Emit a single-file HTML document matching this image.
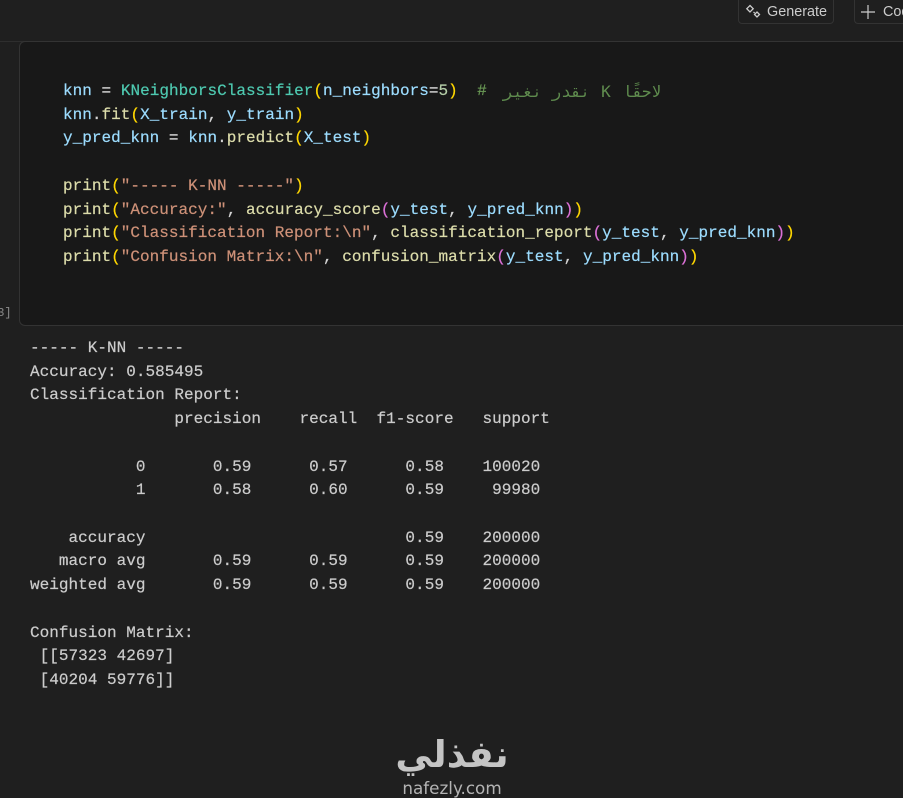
<!DOCTYPE html>
<html><head><meta charset="utf-8"><style>
html,body{margin:0;padding:0;background:#1f1f1f;width:903px;height:798px;overflow:hidden}
body{position:relative;font-family:"Liberation Mono",monospace}
pre{margin:0;position:absolute;font:16px/23.7px "Liberation Mono",monospace;white-space:pre;letter-spacing:.025px;-webkit-text-stroke:.2px currentColor}
.btn{position:absolute;top:-6px;height:30px;border:1px solid #333;border-radius:4px;box-sizing:border-box;font:14.4px "Liberation Sans",sans-serif;color:#ccc;line-height:34px;white-space:nowrap;overflow:hidden}
.v{color:#9cdcfe}.f{color:#dcdcaa}.c{color:#4ec9b0}.s{color:#ce9178}.y{color:#ffd700}.p{color:#da70d6}.g{color:#6a9955}.n{color:#b5cea8}.o{color:#d4d4d4}
.ar{position:absolute;top:80px;height:24px;font:16px/24px "DejaVu Sans Mono","Liberation Mono",monospace;color:#5f8c4e;white-space:nowrap}
</style></head><body>
<div style="position:absolute;left:0;top:41px;width:903px;height:1px;background:#2e2e2e"></div>
<div class="btn" style="left:738px;width:96px;padding-left:28px">Generate<svg style="position:absolute;left:5px;top:9px" width="18" height="16" viewBox="0 0 18 16" fill="none" stroke="#ccc" stroke-width="1.300"><path d="M6 1.500l3.200 3.200-3.200 3.200-3.200-3.200z"/><path d="M13 8l2.500 2.500-2.500 2.500-2.500-2.500z"/><path d="M9.500 8l1.200 1"/></svg></div>
<div class="btn" style="left:854px;width:60px;padding-left:28px;border-right:0;border-radius:4px 0 0 4px">Code<svg style="position:absolute;left:5px;top:9px" width="16" height="16" viewBox="0 0 16 16" stroke="#ccc" stroke-width="1.200"><path d="M8 1v14M1 8h14"/></svg></div>
<div style="position:absolute;left:19px;top:41px;width:900px;height:285px;background:#181818;border:1px solid #333;border-radius:6px;box-sizing:border-box"></div>
<div style="position:absolute;left:-10px;top:306px;font:12px 'Liberation Mono',monospace;color:#8a8a8a">[3]</div>
<pre style="left:63px;top:80px"><span class="v">knn</span> <span class="o">=</span> <span class="c">KNeighborsClassifier</span><span class="y">(</span><span class="v">n_neighbors</span><span class="o">=</span><span class="n">5</span><span class="y">)</span>  <span class="g">#</span></pre>
<div class="ar" style="left:495px;width:95px;text-align:right" dir="rtl">نقدر نغير</div>
<div class="ar" style="left:600px;width:12px;text-align:center">K</div>
<div class="ar" style="left:620px;width:41px;text-align:right" dir="rtl">لاحقًا</div>
<pre style="left:63px;top:103.700px"><span class="v">knn</span><span class="o">.</span><span class="f">fit</span><span class="y">(</span><span class="v">X_train</span><span class="o">,</span> <span class="v">y_train</span><span class="y">)</span>
<span class="v">y_pred_knn</span> <span class="o">=</span> <span class="v">knn</span><span class="o">.</span><span class="f">predict</span><span class="y">(</span><span class="v">X_test</span><span class="y">)</span>

<span class="f">print</span><span class="y">(</span><span class="s">"----- K-NN -----"</span><span class="y">)</span>
<span class="f">print</span><span class="y">(</span><span class="s">"Accuracy:"</span><span class="o">,</span> <span class="f">accuracy_score</span><span class="p">(</span><span class="v">y_test</span><span class="o">,</span> <span class="v">y_pred_knn</span><span class="p">)</span><span class="y">)</span>
<span class="f">print</span><span class="y">(</span><span class="s">"Classification Report:\n"</span><span class="o">,</span> <span class="f">classification_report</span><span class="p">(</span><span class="v">y_test</span><span class="o">,</span> <span class="v">y_pred_knn</span><span class="p">)</span><span class="y">)</span>
<span class="f">print</span><span class="y">(</span><span class="s">"Confusion Matrix:\n"</span><span class="o">,</span> <span class="f">confusion_matrix</span><span class="p">(</span><span class="v">y_test</span><span class="o">,</span> <span class="v">y_pred_knn</span><span class="p">)</span><span class="y">)</span></pre>
<pre style="left:30px;top:337px;color:#cccccc;line-height:23.72px">----- K-NN -----
Accuracy: 0.585495
Classification Report:
               precision    recall  f1-score   support

           0       0.59      0.57      0.58    100020
           1       0.58      0.60      0.59     99980

    accuracy                           0.59    200000
   macro avg       0.59      0.59      0.59    200000
weighted avg       0.59      0.59      0.59    200000

Confusion Matrix:
 [[57323 42697]
 [40204 59776]]</pre>
<div style="position:absolute;left:392px;top:730px;width:120px;text-align:center;font:bold 37px/50px 'DejaVu Sans',sans-serif;color:#c4c4c4;white-space:nowrap" dir="rtl">نفذلي</div>
<div style="position:absolute;left:382px;top:778px;width:140px;text-align:center;font:16.800px/20px 'DejaVu Sans',sans-serif;color:#b4b4b4;white-space:nowrap">nafezly.com</div>
</body></html>
